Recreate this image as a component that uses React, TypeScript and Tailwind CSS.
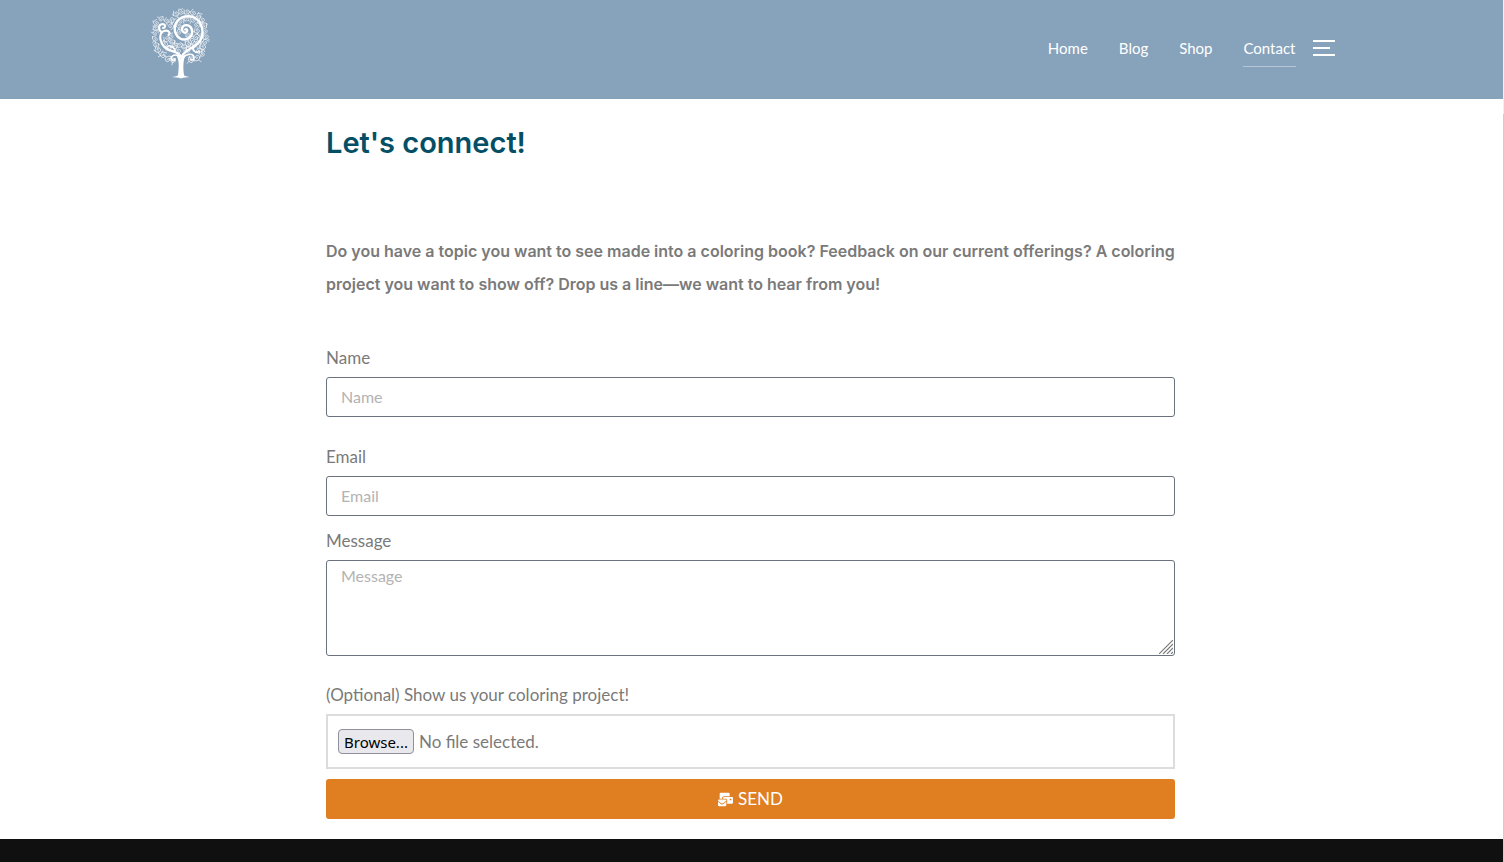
import { useRef, useState } from "react"
import { FaMailBulk } from "react-icons/fa"

const links = ["Home", "Blog", "Shop", "Contact"]

// x, y, rotation, scale of the small curls in the crown
const curls = [
  [25, 6, 20, 1], [30, 4, 90, 1], [36, 4, 10, 1], [42, 5, 60, 1],
  [48, 8, 120, 1], [51, 12, 40, 1], [53, 17, 200, 1], [54, 23, 80, 1],
  [55, 29, 0, 1], [54, 34, 140, 1], [52, 39, 30, 1.1], [48, 43, 200, 1.1],
  [51, 46, 80, 1], [46, 50, 0, 1.2], [40, 52, 100, 1.1], [17, 51, 180, 1.2],
  [22, 52, 60, 1.1], [12, 47, 120, 1.1], [7, 42, 30, 1.1], [5, 37, 210, 1],
  [4, 31, 80, 1], [4, 25, 150, 0.9], [5, 20, 10, 1], [5, 15, 70, 1],
  [10, 11, 170, 0.9], [16, 13, 50, 0.9], [20, 18, 240, 1], [21, 12, 300, 1],
  [16, 31, 0, 1.1], [20, 28, 90, 1], [21, 34, 200, 1], [14, 36, 40, 1.1],
  [18, 40, 300, 1], [24, 38, 120, 1.1], [29, 37, 0, 1], [33, 39, 200, 1],
  [37, 36, 80, 1.1], [41, 33, 330, 1.1], [45, 29, 150, 1.1], [46, 23, 30, 1],
  [46, 17, 240, 1], [42, 12, 90, 1], [36, 11, 0, 0.9], [30, 13, 190, 1],
  [28, 18, 40, 0.9], [28, 24, 120, 0.9], [37, 27, 10, 0.8], [42, 38, 40, 1.1],
  [47, 35, 220, 1], [37, 42, 130, 1], [27, 43, 40, 1], [50, 28, 300, 0.9],
]

const TreeLogo = () => (
  <svg
    viewBox="0 0 60 71"
    className="w-[60px] h-[71px]"
    fill="none"
    stroke="white"
    strokeLinecap="round"
    role="img"
    aria-label="Tree"
  >
    <g strokeWidth="0.8" opacity="0.85">
      {curls.map(([x, y, r, s], i) => (
        <path
          key={i}
          transform={`translate(${x} ${y}) rotate(${r}) scale(${s})`}
          d="M-3 2C-1 3 2.500 2 2.200-.5C2-2.600-1-2.600-1.200-.8C-1.200.4.4.7.6-.3M-2 2C-3 .5-2.500-1-3.200-1.800M1.500 1.600C2.500 2 2.800 3 3.400 3"
        />
      ))}
    </g>
    <path
      strokeWidth="2.400"
      d="M31 48C35 41 44 40 49 33C54 25 51 13 43 9.500C35 6 26 10 24 18C22.500 26 28 32 34 31.500C40 31 42.500 25.500 40.500 20.500C38.500 16 32 16 31 20.500C30.500 24 34.500 26 36 23.500C36.800 21.500 35.200 20.500 34.300 21.500"
    />
    <path
      strokeWidth="2.100"
      d="M30 49C28 42 18 45 12.500 38C7.500 31 8.500 24 14 22.800C18 22 20 25.500 17.500 27M11 24.500C7 22 7 16.500 11.500 16C14.500 16 15 20 12 20"
    />
    <path
      strokeWidth="1.600"
      d="M30 50C28 46 21 46 20.500 50C20.500 53 24 53 24 50.800M31 52C34 45 42 45 43 49C43.500 52 40 53 39.500 51M24 44C24 39 19 36 16 39M42 39C41 43 46 46 48 43"
    />
    <path
      fill="white"
      stroke="none"
      d="M25 47C28.500 48.500 29 49.500 30 51C31 49 32.500 47.500 35 46.500C32 51 32 60 33 67C33.500 68.300 36 68.500 39 69C36 69.800 33 69 30 70.500C27 69 24 69.800 20.500 69C24 68.500 26.500 68.300 27 67C28 60 28.500 51 25 47Z"
    />
  </svg>
)

const Header = () => (
  <header className="bg-[#87a2bb]">
    <div className="mx-auto flex h-[99px] max-w-[1202px] items-center justify-between pr-[18px]">
      <a href="#" className="-mt-3">
        <TreeLogo />
      </a>
      <div className="flex items-center gap-[17px] -mt-1">
        <nav className="flex gap-[31px] font-['Lato',sans-serif] text-[15px] leading-6 text-white">
          {links.map((link) => (
            <a
              key={link}
              href="#"
              className={
                link === "Contact"
                  ? "border-b border-white/40 pt-2 pb-1.5"
                  : "border-b border-transparent pt-2 pb-1.5"
              }
            >
              {link}
            </a>
          ))}
        </nav>
        <button
          type="button"
          aria-label="Open sidebar"
          className="flex w-[22px] flex-col gap-[5px]"
        >
          <span className="h-0.5 w-full bg-white" />
          <span className="h-0.5 w-[17px] bg-white" />
          <span className="h-0.5 w-full bg-white" />
        </button>
      </div>
    </div>
  </header>
)

const labelClass = "mb-1.5 block leading-[26px]"
const fieldClass =
  "block w-full rounded-[3px] border border-[#69727d] bg-white px-3.5 text-base text-[#7a7a7a] placeholder:text-[#b3b3b3] focus:outline-none"

const ContactForm = () => {
  const fileRef = useRef<HTMLInputElement>(null)
  const [fileName, setFileName] = useState("")

  return (
    <form
      className="font-['Lato',sans-serif] text-[17px] leading-6 text-[#7a7a7a]"
      onSubmit={(e) => e.preventDefault()}
    >
      <label htmlFor="name" className={labelClass}>
        Name
      </label>
      <input id="name" type="text" placeholder="Name" className={`${fieldClass} h-10 pb-0.5`} />

      <label htmlFor="email" className={`${labelClass} mt-[27px]`}>
        Email
      </label>
      <input id="email" type="email" placeholder="Email" className={`${fieldClass} h-10 pb-0.5`} />

      <label htmlFor="message" className={`${labelClass} mt-3`}>
        Message
      </label>
      <div className="relative">
        <textarea
          id="message"
          placeholder="Message"
          className={`${fieldClass} h-24 resize-y py-[3px] leading-6 [&::-webkit-resizer]:hidden`}
        />
        <svg
          viewBox="0 0 14 14"
          className="pointer-events-none absolute right-0.5 bottom-0.5 h-3.5 w-3.5"
          stroke="#777"
          strokeWidth="1.1"
          aria-hidden="true"
        >
          <path d="M0 14L14 0M4 14L14 4M8 14L14 8M12 14L14 12" />
        </svg>
      </div>

      <label htmlFor="project" className={`${labelClass} mt-[26px]`}>
        (Optional) Show us your coloring project!
      </label>
      <div className="flex h-[55px] items-center gap-[5px] border-2 border-[#dcdcdc] px-2.5">
        <input
          ref={fileRef}
          id="project"
          type="file"
          className="sr-only"
          onChange={(e) => setFileName(e.target.files?.[0]?.name ?? "")}
        />
        <button
          type="button"
          onClick={() => fileRef.current?.click()}
          className="h-[25px] rounded-[4px] border border-[#8f8f9d] bg-[#e9e9ed] px-[5px] font-['Noto_Sans',sans-serif] text-[15px] leading-5 text-black"
        >
          Browse...
        </button>
        <span>{fileName || "No file selected."}</span>
      </div>

      <button
        type="submit"
        className="mt-2.5 flex h-10 w-full items-center justify-center gap-[5px] rounded-[3px] bg-[#e07e22] text-white"
      >
        <FaMailBulk className="h-[15px] w-[15px]" />
        SEND
      </button>
    </form>
  )
}

const App = () => {
  return (
    <div className="flex min-h-screen bg-white">
      <div className="flex flex-1 flex-col">
        <Header />
        <main className="mx-auto w-full max-w-[851px] pr-0.5 pb-5 font-['Inter',sans-serif]">
          <h1 className="pt-6 text-[29px] leading-10 font-semibold text-[#054f66]">
            Let's connect!
          </h1>
          <p className="mt-[72px] mb-11 text-base leading-[33px] font-semibold text-[#7a7a7a]">
            Do you have a topic you want to see made into a coloring book?
            Feedback on our current offerings? A coloring project you want to
            show off? Drop us a line—we want to hear from you!
          </p>
          <ContactForm />
        </main>
        <footer className="min-h-[23px] flex-1 bg-[#101010]" />
      </div>
      <div className="flex w-px flex-col bg-[#f0f0f0]">
        <div className="mt-[114px] flex-1 bg-[#cdcdcd]" />
      </div>
    </div>
  )
}

export default App
